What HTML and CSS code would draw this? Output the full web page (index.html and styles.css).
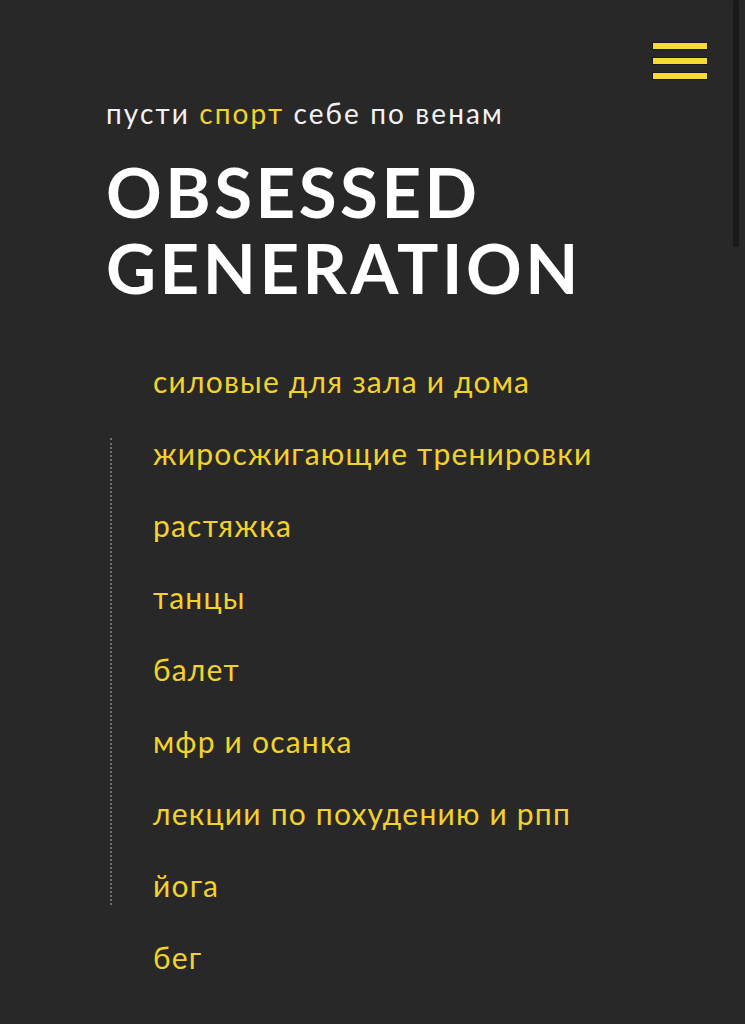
FILE: index.html
```html
<!DOCTYPE html>
<html lang="ru">
<head>
<meta charset="utf-8">
<title>Obsessed Generation</title>
<link rel="stylesheet" href="styles.css">
</head>
<body>
<div class="page">
  <header class="topbar">
    <button class="menu" aria-label="меню">
      <span class="bar"></span>
      <span class="bar"></span>
      <span class="bar"></span>
    </button>
  </header>
  <section class="hero">
    <p class="tagline">пусти <span class="accent">спорт</span> себе по венам</p>
    <h1 class="title">OBSESSED<br>GENERATION</h1>
  </section>
  <ul class="list">
    <li class="item">силовые для зала и дома</li>
    <li class="item">жиросжигающие тренировки</li>
    <li class="item">растяжка</li>
    <li class="item">танцы</li>
    <li class="item">балет</li>
    <li class="item">мфр и осанка</li>
    <li class="item">лекции по похудению и рпп</li>
    <li class="item">йога</li>
    <li class="item">бег</li>
  </ul>
</div>
<div class="scroll-thumb"></div>
</body>
</html>
```
FILE: styles.css
```css
html, body {
  margin: 0;
  padding: 0;
  background: #282828;
}
body {
  font-family: Lato, "Noto Sans", sans-serif;
  color: #f4f4f4;
  overflow: hidden;
}
.page {
  width: 745px;
  height: 1024px;
}
.topbar {
  height: 97px;
  box-sizing: border-box;
  display: flex;
  justify-content: flex-end;
  padding: 43px 38px 0 0;
}
.menu {
  display: flex;
  flex-direction: column;
  gap: 9px;
  padding: 0;
  margin: 0;
  border: 0;
  background: none;
  cursor: pointer;
}
.bar {
  display: block;
  width: 54px;
  height: 6px;
  background: #f7d937;
  box-shadow: 0 0 0 1px rgba(0,0,0,0.35);
}
.hero {
  padding-left: 106px;
}
.tagline {
  margin: 0;
  font-size: 28px;
  line-height: 1.2;
  font-weight: 400;
  letter-spacing: 2.1px;
  color: #f2f2f2;
}
.accent {
  color: #f3d22b;
}
.title {
  margin: 23px 0 0;
  font-size: 69px;
  line-height: 76px;
  font-weight: 700;
  letter-spacing: 3.5px;
  color: #ffffff;
}
.list {
  position: relative;
  list-style: none;
  margin: 39px 0 0;
  padding: 0 0 0 153px;
}
.list::before {
  content: "";
  position: absolute;
  left: 110px;
  top: 93px;
  height: 467px;
  border-left: 2px dotted #6f6f6f;
}
.item {
  height: 72px;
  font-size: 30px;
  line-height: 72px;
  letter-spacing: 1.2px;
  color: #f3d22b;
  white-space: nowrap;
}
.scroll-thumb {
  position: fixed;
  top: 0;
  right: 6px;
  width: 6px;
  height: 247px;
  border-radius: 3px;
  background: #1a1a1a;
}
```
